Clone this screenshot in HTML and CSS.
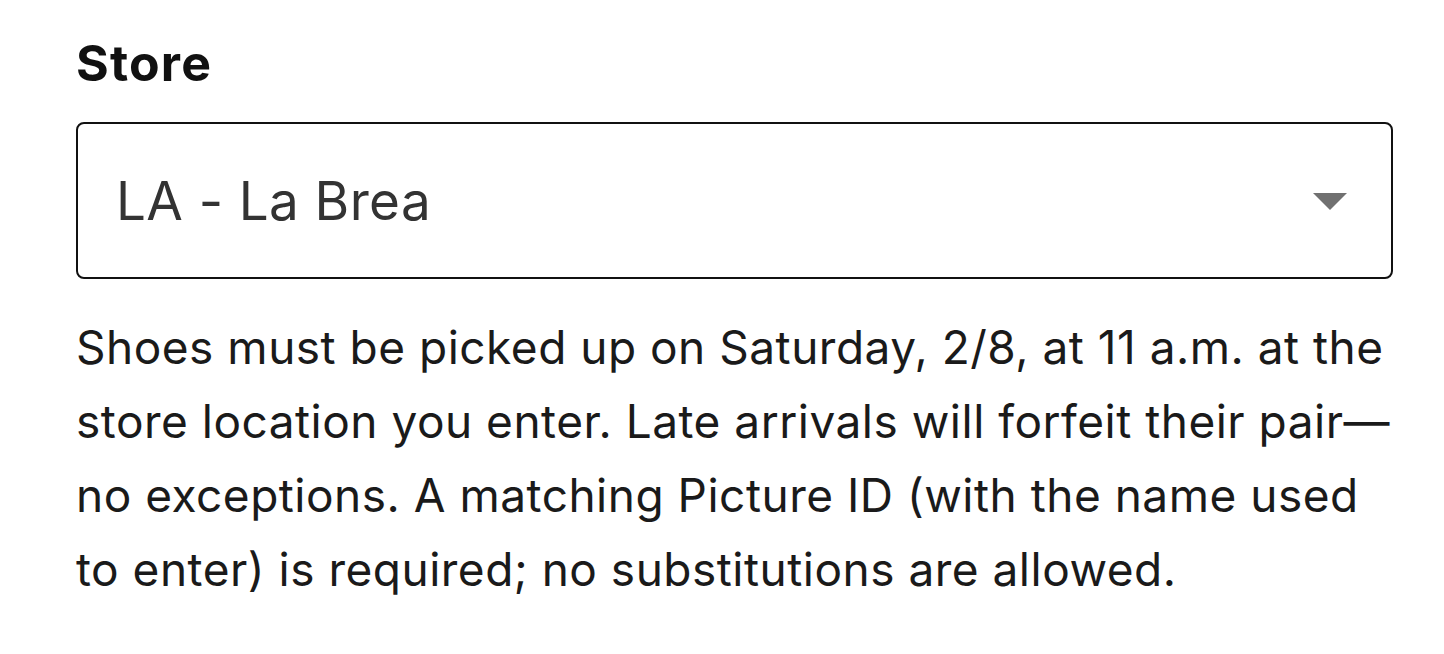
FILE: index.html
```
<!DOCTYPE html>
<html lang="en">
<head>
    <meta charset="UTF-8">
    <meta name="viewport" content="width=device-width, initial-scale=1.0">
    <title>Store</title>
    <link rel="stylesheet" href="styles.css">
</head>
<body>
    <form class="storeForm">
        <label class="fieldLabel" for="store">Store</label>
        <div class="selectWrap">
            <select id="store" class="storeSelect">
                <option value="la-brea" selected>LA - La Brea</option>
            </select>
            <span class="selectArrow"></span>
        </div>
        <p class="fieldHint">Shoes must be picked up on Saturday, 2/8, at 11 a.m. at the store location you enter. Late arrivals will forfeit their pair—no exceptions. A matching Picture ID (with the name used to enter) is required; no substitutions are allowed.</p>
    </form>
</body>
</html>
```

FILE: styles.css
```
body {
    margin: 0;
    background-color: #ffffff;
    font-family: Inter, "Noto Sans", sans-serif;
}

.storeForm {
    width: 1317px;
    padding: 30px 0 0 76px;
}

.fieldLabel {
    display: block;
    font-size: 50px;
    font-weight: 650;
    letter-spacing: 1.2px;
    line-height: 66px;
    color: #111111;
    margin-bottom: 26px;
}

.selectWrap {
    position: relative;
}

.storeSelect {
    appearance: none;
    display: block;
    box-sizing: border-box;
    width: 100%;
    height: 157px;
    border: 2px solid #111111;
    border-radius: 8px;
    background-color: #ffffff;
    padding: 0 38px;
    font-family: Inter, "Noto Sans", sans-serif;
    font-size: 53px;
    letter-spacing: 0.4px;
    color: #333333;
}

.selectArrow {
    position: absolute;
    right: 46px;
    top: 71px;
    width: 0;
    height: 0;
    border-left: 17px solid transparent;
    border-right: 17px solid transparent;
    border-top: 17px solid #707070;
    pointer-events: none;
}

.fieldHint {
    margin: 31px 0 0;
    font-size: 46px;
    letter-spacing: 0.5px;
    line-height: 74px;
    color: #1a1a1a;
}
```
